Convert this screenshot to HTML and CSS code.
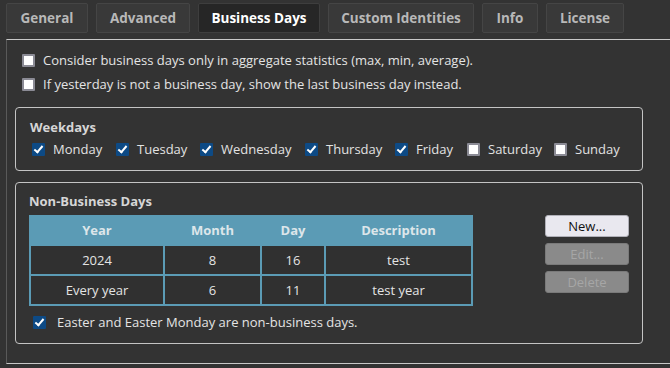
FILE: index.html
```html
<!DOCTYPE html>
<html>
<head>
<meta charset="utf-8">
<link rel="stylesheet" href="styles.css">
</head>
<body>
<div class="tabs">
  <div class="tab t-general">General</div>
  <div class="tab t-advanced">Advanced</div>
  <div class="tab active t-business">Business Days</div>
  <div class="tab t-custom">Custom Identities</div>
  <div class="tab t-info">Info</div>
  <div class="tab t-license">License</div>
</div>
<div class="panel">
  <div class="options">
    <label class="opt"><span class="cb"></span>Consider business days only in aggregate statistics (max, min, average).</label>
    <label class="opt"><span class="cb"></span>If yesterday is not a business day, show the last business day instead.</label>
  </div>
  <div class="group weekdays">
    <div class="gtitle">Weekdays</div>
    <div class="days">
      <label class="day d-mon"><span class="cb on"></span>Monday</label>
      <label class="day d-tue"><span class="cb on"></span>Tuesday</label>
      <label class="day d-wed"><span class="cb on"></span>Wednesday</label>
      <label class="day d-thu"><span class="cb on"></span>Thursday</label>
      <label class="day d-fri"><span class="cb on"></span>Friday</label>
      <label class="day d-sat"><span class="cb"></span>Saturday</label>
      <label class="day d-sun"><span class="cb"></span>Sunday</label>
    </div>
  </div>
  <div class="group nbd">
    <div class="gtitle">Non-Business Days</div>
    <div class="nbd-body">
      <div class="nbd-left">
        <div class="grid">
          <div class="grow ghead">
            <div class="gc c-year">Year</div><div class="gc c-month">Month</div><div class="gc c-day">Day</div><div class="gc c-desc">Description</div>
          </div>
          <div class="grow">
            <div class="gc c-year">2024</div><div class="gc c-month">8</div><div class="gc c-day">16</div><div class="gc c-desc">test</div>
          </div>
          <div class="grow">
            <div class="gc c-year">Every year</div><div class="gc c-month">6</div><div class="gc c-day">11</div><div class="gc c-desc">test year</div>
          </div>
        </div>
        <label class="opt easter"><span class="cb on"></span>Easter and Easter Monday are non-business days.</label>
      </div>
      <div class="buttons">
        <div class="btn primary">New...</div>
        <div class="btn disabled">Edit...</div>
        <div class="btn disabled">Delete</div>
      </div>
    </div>
  </div>
</div>
</body>
</html>
```

FILE: styles.css
```css
html, body {
  margin: 0;
  padding: 0;
  background: #333333;
  width: 670px;
  height: 368px;
  overflow: hidden;
}
body {
  font-family: "Open Sans", "Noto Sans", sans-serif;
  font-size: 13px;
  color: #e2e2e2;
}
.tabs {
  display: flex;
  gap: 8px;
  padding: 3px 0 0 6px;
  height: 30px;
  margin-bottom: 6px;
}
.tab {
  box-sizing: border-box;
  height: 30px;
  display: flex;
  align-items: center;
  justify-content: center;
  background: #393939;
  border: 1px solid #454545;
  border-radius: 2px;
  color: #b8b8b8;
  font-weight: bold;
  font-size: 13.5px;
}
.tab.active {
  background: #262626;
  color: #ffffff;
  border-color: #3e3e3e;
}
.t-general { width: 82px; }
.t-advanced { width: 94px; }
.t-business { width: 122px; }
.t-custom { width: 146px; }
.t-info { width: 56px; }
.t-license { width: 78px; }

.panel {
  box-sizing: border-box;
  margin-left: 6px;
  height: 325px;
  border-top: 1px solid #c8c8c8;
  border-left: 1px solid #5a5a5a;
  border-bottom: 1px solid #c8c8c8;
  padding: 8px 0 0 8px;
}
.options {
  padding-left: 7px;
}
.opt {
  display: flex;
  align-items: center;
  height: 24px;
  gap: 8px;
  color: #e4e4e4;
}
.cb {
  box-sizing: border-box;
  width: 13px;
  height: 13px;
  flex: none;
  background: #ffffff;
  border: 2px solid #8b8b95;
  border-radius: 1px;
  position: relative;
}
.cb.on {
  background: #0d4a85;
  border-color: #0d4a85;
}
.cb.on::after {
  content: "";
  position: absolute;
  left: 2px;
  top: -1px;
  width: 3px;
  height: 7px;
  border: solid #ffffff;
  border-width: 0 2px 2px 0;
  transform: rotate(40deg);
}
.group {
  box-sizing: border-box;
  width: 628px;
  border: 1px solid #c4c4c4;
  border-radius: 4px;
}
.weekdays {
  margin-top: 11px;
  height: 64px;
  padding: 10px 0 0 14px;
}
.gtitle {
  font-weight: bold;
  color: #d6d6d6;
  line-height: 18px;
  height: 18px;
}
.days {
  display: flex;
  margin-top: 3px;
  height: 20px;
  align-items: center;
  padding-left: 2px;
}
.day {
  display: flex;
  align-items: center;
  gap: 8px;
}
.d-mon { width: 84px; }
.d-tue { width: 84px; }
.d-wed { width: 105px; }
.d-thu { width: 90px; }
.d-fri { width: 72px; }
.d-sat { width: 87px; }

.nbd {
  margin-top: 11px;
  height: 162px;
  padding: 9px 0 0 13px;
}
.nbd .gtitle {
  margin-bottom: 5px;
}
.nbd-body {
  display: flex;
}
.nbd-left {
  width: 444px;
}
.grid {
  box-sizing: border-box;
  width: 444px;
  background: #5b9bb5;
  padding: 0 2px 2px 2px;
  display: flex;
  flex-direction: column;
  gap: 2px;
}
.grow {
  display: flex;
  gap: 2px;
  height: 28px;
}
.grow.ghead {
  height: 29px;
  padding-top: 2px;
  margin-top: -2px;
}
.gc {
  display: flex;
  align-items: center;
  justify-content: center;
  background: #303030;
  color: #e4e4e4;
}
.ghead .gc {
  background: #5b9bb5;
  color: #dde6ea;
  font-weight: bold;
}
.c-year { width: 132px; }
.c-month { width: 95px; }
.c-day { width: 62px; }
.c-desc { flex: 1; }
.easter {
  margin-top: 4px;
  padding-left: 4px;
  gap: 11px;
}
.buttons {
  display: flex;
  flex-direction: column;
  gap: 6px;
  margin-left: 72px;
  padding-top: 0;
}
.btn {
  box-sizing: border-box;
  width: 84px;
  height: 22px;
  border-radius: 3px;
  display: flex;
  align-items: center;
  justify-content: center;
  font-size: 13px;
}
.btn.primary {
  background: #e9e8ef;
  border: 1px solid #b0b0b8;
  color: #111111;
}
.btn.disabled {
  background: #8a8a8a;
  border: 1px solid #7a7a7a;
  color: #a6a6a6;
}
```
